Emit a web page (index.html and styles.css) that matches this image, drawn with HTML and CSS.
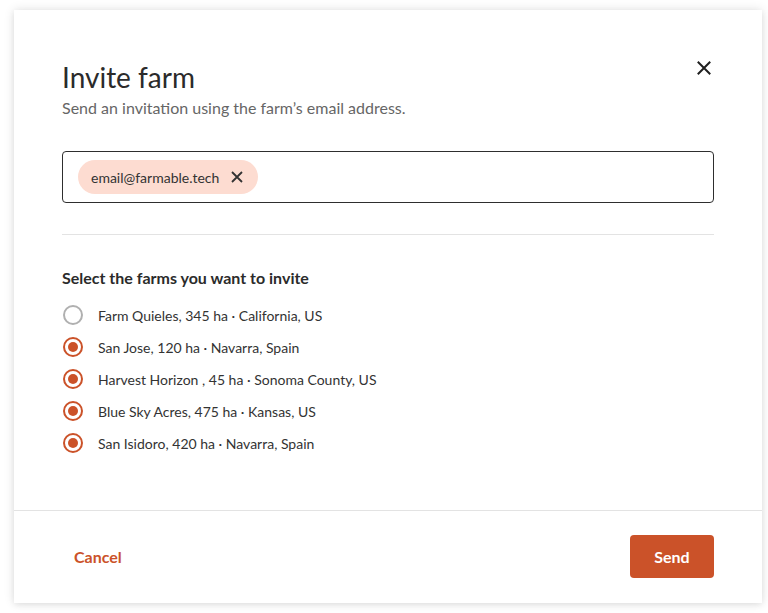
FILE: index.html
```html
<!DOCTYPE html>
<html lang="en">
<head>
<meta charset="utf-8">
<title>Invite farm</title>
<link rel="stylesheet" href="styles.css">
</head>
<body>
<div class="stage">
  <div class="modal">
    <div class="modal-body">
      <div class="header">
        <div class="titles">
          <h1 class="title">Invite farm</h1>
          <p class="subtitle">Send an invitation using the farm’s email address.</p>
        </div>
        <button class="close" aria-label="Close">
          <svg width="14" height="14" viewBox="0 0 14 14"><path d="M1.5 1.5 L12.5 12.5 M12.5 1.5 L1.5 12.5" stroke="#1f1f1f" stroke-width="2" stroke-linecap="square" fill="none"/></svg>
        </button>
      </div>

      <div class="email-input">
        <span class="chip">
          <span class="chip-text">email@farmable.tech</span>
          <svg class="chip-x" width="12" height="12" viewBox="0 0 12 12"><path d="M1 1 L11 11 M11 1 L1 11" stroke="#333" stroke-width="1.8" fill="none"/></svg>
        </span>
      </div>

      <hr class="divider">

      <h2 class="section-title">Select the farms you want to invite</h2>
      <ul class="farm-list">
        <li class="farm"><span class="radio"></span><span>Farm Quieles, 345 ha · California, US</span></li>
        <li class="farm"><span class="radio checked"></span><span>San Jose, 120 ha · Navarra, Spain</span></li>
        <li class="farm"><span class="radio checked"></span><span>Harvest Horizon , 45 ha · Sonoma County, US</span></li>
        <li class="farm"><span class="radio checked"></span><span>Blue Sky Acres, 475 ha · Kansas, US</span></li>
        <li class="farm"><span class="radio checked"></span><span>San Isidoro, 420 ha · Navarra, Spain</span></li>
      </ul>
    </div>
    <div class="footer">
      <button class="btn-text">Cancel</button>
      <button class="btn-primary">Send</button>
    </div>
  </div>
</div>
</body>
</html>
```

FILE: styles.css
```css
* { box-sizing: border-box; }
html, body {
  margin: 0;
  padding: 0;
  background: #ffffff;
  font-family: Lato, "Open Sans", "Liberation Sans", sans-serif;
  color: #333;
}
.stage {
  padding: 10px 6px 10px 14px;
}
.modal {
  width: 748px;
  height: 593px;
  background: #fff;
  box-shadow: 0 0 10px rgba(0,0,0,0.12), 0 2px 6px rgba(0,0,0,0.06);
  display: flex;
  flex-direction: column;
}
.modal-body {
  flex: 1;
  padding: 50px 48px 0 48px;
}
.header {
  display: flex;
  justify-content: space-between;
  align-items: flex-start;
}
.title {
  margin: 0;
  font-size: 28px;
  line-height: 34px;
  font-weight: 400;
  color: #2b2b2b;
}
.subtitle {
  margin: 4px 0 0 0;
  font-size: 16px;
  line-height: 20px;
  color: #666;
}
.close {
  border: 0;
  background: transparent;
  padding: 0;
  width: 24px;
  height: 24px;
  margin-top: -4px;
  margin-right: -2px;
  display: flex;
  align-items: center;
  justify-content: center;
  cursor: pointer;
}
.email-input {
  margin-top: 33px;
  height: 52px;
  width: 652px;
  border: 1px solid #2e2e2e;
  border-radius: 4px;
  padding: 0 15px;
  display: flex;
  align-items: center;
}
.chip {
  display: inline-flex;
  align-items: center;
  gap: 12px;
  height: 34px;
  padding: 0 15px 0 13px;
  border-radius: 17px;
  background: #fddcd1;
  font-size: 14px;
  color: #333;
}
.chip-text { line-height: 17px; }
.divider {
  margin: 31px 0 0 0;
  border: 0;
  border-top: 1px solid #e3e3e3;
  width: 652px;
}
.section-title {
  margin: 33px 0 11px 0;
  font-size: 16px;
  line-height: 20px;
  font-weight: 700;
  color: #2b2b2b;
}
.farm-list {
  list-style: none;
  margin: 0;
  padding: 0;
}
.farm {
  height: 32px;
  display: flex;
  align-items: center;
  gap: 15px;
  font-size: 14px;
  color: #333;
}
.radio {
  width: 20px;
  height: 20px;
  margin-left: 1px;
  border-radius: 50%;
  border: 2px solid #b0b0b0;
  flex: none;
  display: flex;
  align-items: center;
  justify-content: center;
}
.radio.checked {
  border-color: #cb5229;
}
.radio.checked::after {
  content: "";
  width: 10px;
  height: 10px;
  border-radius: 50%;
  background: #cb5229;
}
.footer {
  border-top: 1px solid #e3e3e3;
  height: 93px;
  padding: 0 48px 1px 48px;
  display: flex;
  align-items: center;
  justify-content: space-between;
}
.btn-text {
  border: 0;
  background: transparent;
  font-family: inherit;
  font-size: 16px;
  font-weight: 700;
  color: #cb5229;
  padding: 10px 12px;
  cursor: pointer;
}
.btn-primary {
  border: 0;
  border-radius: 4px;
  background: #cb5229;
  color: #fff;
  font-family: inherit;
  font-size: 16px;
  font-weight: 700;
  height: 43px;
  width: 84px;
  cursor: pointer;
}
```
